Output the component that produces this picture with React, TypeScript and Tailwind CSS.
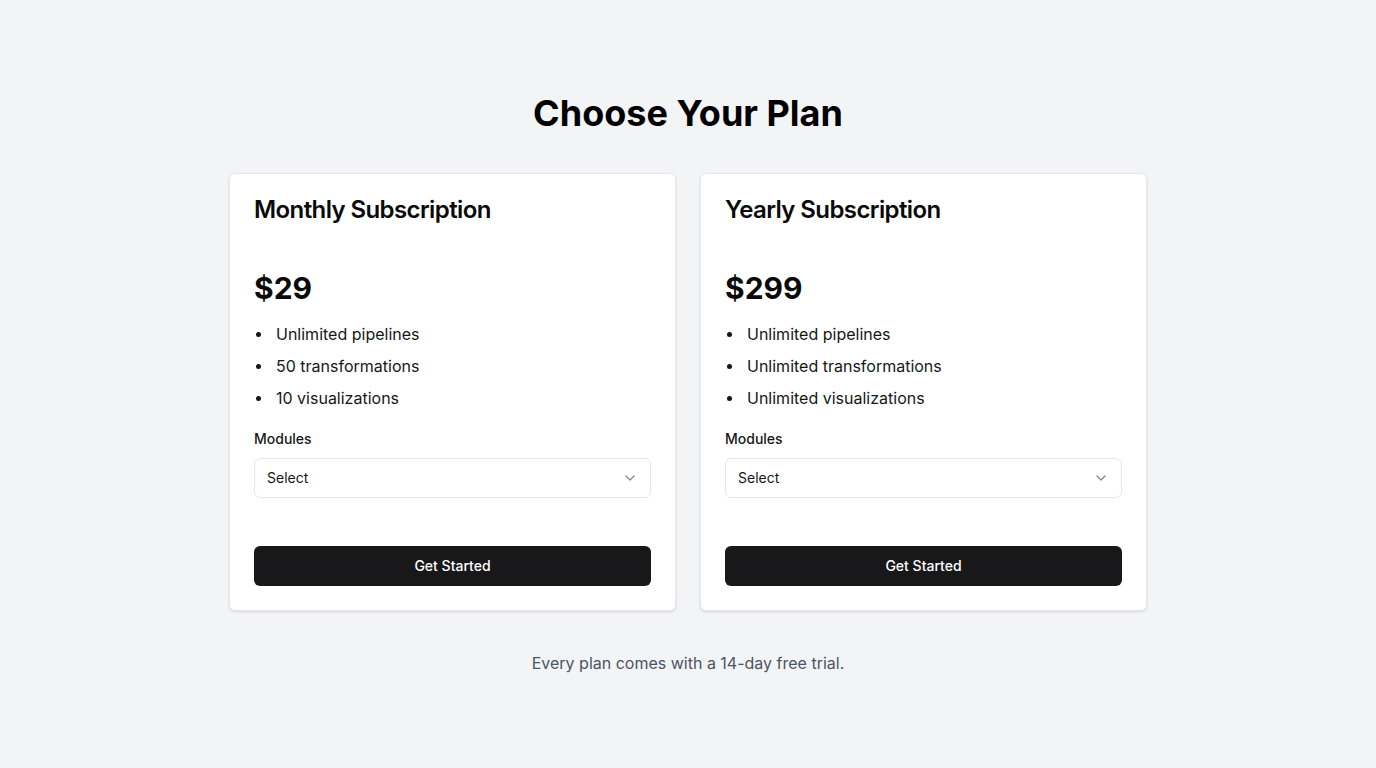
import { ChevronDown } from "lucide-react";

const plans = [
  {
    name: "Monthly Subscription",
    price: "$29",
    features: ["Unlimited pipelines", "50 transformations", "10 visualizations"],
  },
  {
    name: "Yearly Subscription",
    price: "$299",
    features: ["Unlimited pipelines", "Unlimited transformations", "Unlimited visualizations"],
  },
];

export default function App() {
  return (
    <div
      className="bg-gray-100 min-h-screen flex flex-col items-center justify-center"
      style={{ fontFamily: "Inter, 'Noto Sans', sans-serif" }}
    >
      <h1 className="text-4xl font-bold text-black mb-10">Choose Your Plan</h1>

      <div className="grid grid-cols-2 gap-6 w-[918px]">
        {plans.map((plan) => (
          <div key={plan.name} className="bg-white border border-gray-200 rounded-md shadow-sm p-6 flex flex-col">
            <h2 className="text-2xl leading-6 font-semibold text-[#0a0a0a] tracking-tight">{plan.name}</h2>
            <p className="text-3xl font-bold text-[#0a0a0a] mt-12">{plan.price}</p>
            <ul className="mt-4 flex flex-col gap-2 text-base text-[#171717]">
              {plan.features.map((f) => (
                <li key={f} className="flex items-center">
                  <span className="w-[5px] h-[5px] rounded-full bg-[#171717] ml-[2px] mr-[15px]" />
                  {f}
                </li>
              ))}
            </ul>

            {/* select */}
            <label className="text-sm font-medium text-[#171717] mt-[19px] mb-[9px]">Modules</label>
            <button className="h-10 w-full border border-gray-200 rounded-md px-3 flex items-center justify-between text-sm text-[#171717]">
              <span>Select</span>
              <ChevronDown size={16} className="opacity-50" />
            </button>

            <button className="mt-12 h-10 w-full bg-[#18181b] text-white text-sm font-medium rounded-md">
              Get Started
            </button>
          </div>
        ))}
      </div>

      <p className="mt-10 text-base text-gray-600">Every plan comes with a 14-day free trial.</p>
    </div>
  );
}
